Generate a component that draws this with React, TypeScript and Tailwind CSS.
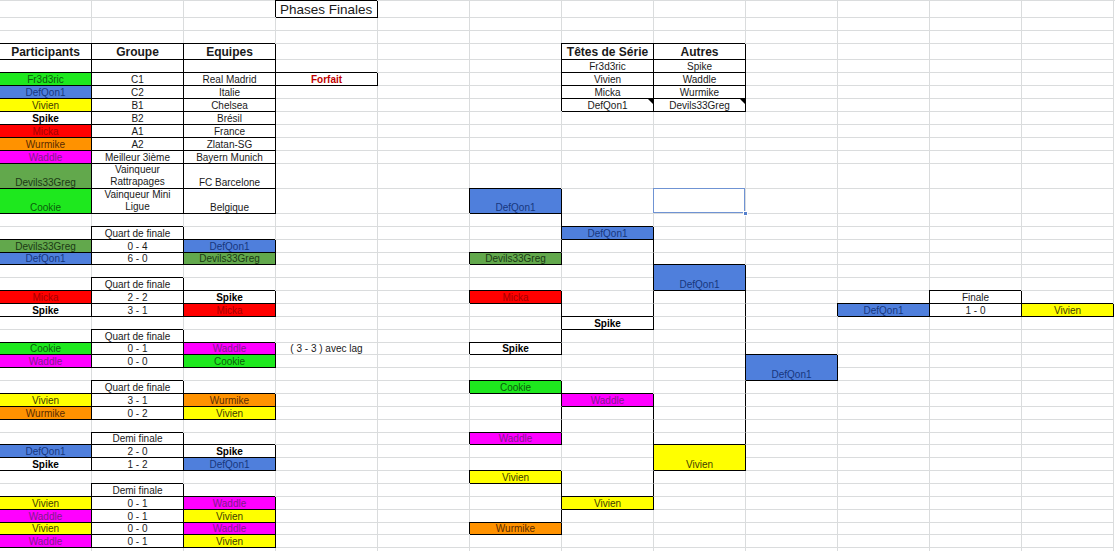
import React from "react";

type Cell = {
  text?: string;
  lines?: string[];
  fill?: string;
  bold?: boolean;
  box?: boolean;
  span?: boolean;
  vr?: boolean;
  tri?: boolean;
  selected?: boolean;
  extra?: string;
};

// fills for each player, like the coloured Excel cells
const fills: Record<string, string> = {
  Fr3d3ric: "bg-[#1ee81e] text-[#0b5c0b]",
  Cookie: "bg-[#1ee81e] text-[#0b5c0b]",
  DefQon1: "bg-[#4f7fdc] text-[#17377e]",
  Vivien: "bg-[#ffff00] text-[#3d3d00]",
  Micka: "bg-[#ff0000] text-[#a30000]",
  Wurmike: "bg-[#ff9200] text-[#5a2b00]",
  Waddle: "bg-[#ff00ff] text-[#7f1a8c]",
  Devils33Greg: "bg-[#62a84c] text-[#1b3a14]",
  Spike: "bg-white text-black",
};

const cells = new Map<string, Cell>();
const put = (r: number, c: number, cell: Cell) => {
  cells.set(`${r},${c}`, { ...cells.get(`${r},${c}`), ...cell });
};
const player = (r: number, c: number, name: string, span = false) =>
  put(r, c, { text: name, fill: fills[name], bold: name === "Spike", box: true, span });
const plain = (r: number, c: number, text: string) => put(r, c, { text, box: true });

// title + tables
put(0, 3, { text: "Phases Finales", box: true, extra: "justify-start pl-1 text-[13.5px] leading-[15px]" });
["Participants", "Groupe", "Equipes"].forEach((t, i) =>
  put(3, i, { text: t, box: true, bold: true, extra: "text-[12px] leading-[14px]" })
);
put(3, 6, { text: "Têtes de Série", box: true, bold: true, extra: "text-[12px] leading-[14px]" });
put(3, 7, { text: "Autres", box: true, bold: true, extra: "text-[12px] leading-[14px]" });
[0, 1, 2].forEach((c) => put(4, c, { box: true }));

const seeds = [
  ["Fr3d3ric", "Spike"],
  ["Vivien", "Waddle"],
  ["Micka", "Wurmike"],
  ["DefQon1", "Devils33Greg"],
];
seeds.forEach(([a, b], i) => {
  plain(4 + i, 6, a);
  plain(4 + i, 7, b);
});
put(7, 6, { tri: true });
put(7, 7, { tri: true });

const teams: [string, string, string][] = [
  ["Fr3d3ric", "C1", "Real Madrid"],
  ["DefQon1", "C2", "Italie"],
  ["Vivien", "B1", "Chelsea"],
  ["Spike", "B2", "Brésil"],
  ["Micka", "A1", "France"],
  ["Wurmike", "A2", "Zlatan-SG"],
  ["Waddle", "Meilleur 3ième", "Bayern Munich"],
];
teams.forEach(([p, g, e], i) => {
  player(5 + i, 0, p);
  plain(5 + i, 1, g);
  plain(5 + i, 2, e);
});
player(12, 0, "Devils33Greg");
put(12, 1, { lines: ["Vainqueur", "Rattrapages"], box: true });
plain(12, 2, "FC Barcelone");
player(13, 0, "Cookie");
put(13, 1, { lines: ["Vainqueur Mini", "Ligue"], box: true });
plain(13, 2, "Belgique");
put(5, 3, { text: "Forfait", box: true, bold: true, extra: "text-[#c00000]" });

// match results
const matches: [number, string, [string, string, string][]][] = [
  [15, "Quart de finale", [["Devils33Greg", "0 - 4", "DefQon1"], ["DefQon1", "6 - 0", "Devils33Greg"]]],
  [19, "Quart de finale", [["Micka", "2 - 2", "Spike"], ["Spike", "3 - 1", "Micka"]]],
  [23, "Quart de finale", [["Cookie", "0 - 1", "Waddle"], ["Waddle", "0 - 0", "Cookie"]]],
  [27, "Quart de finale", [["Vivien", "3 - 1", "Wurmike"], ["Wurmike", "0 - 2", "Vivien"]]],
  [31, "Demi finale", [["DefQon1", "2 - 0", "Spike"], ["Spike", "1 - 2", "DefQon1"]]],
  [
    35,
    "Demi finale",
    [
      ["Vivien", "0 - 1", "Waddle"],
      ["Waddle", "0 - 1", "Vivien"],
      ["Vivien", "0 - 0", "Waddle"],
      ["Waddle", "0 - 1", "Vivien"],
    ],
  ],
];
matches.forEach(([r, title, rows]) => {
  plain(r, 1, title);
  rows.forEach(([a, s, b], i) => {
    player(r + 1 + i, 0, a);
    plain(r + 1 + i, 1, s);
    player(r + 1 + i, 2, b);
  });
});
put(24, 3, { text: "( 3 - 3 ) avec lag" });

// bracket
player(13, 5, "DefQon1");
player(17, 5, "Devils33Greg");
player(20, 5, "Micka");
player(24, 5, "Spike");
player(27, 5, "Cookie");
player(31, 5, "Waddle");
player(34, 5, "Vivien");
player(38, 5, "Wurmike");
player(15, 6, "DefQon1");
player(22, 6, "Spike");
player(28, 6, "Waddle");
player(36, 6, "Vivien");
put(13, 7, { selected: true });
player(18, 7, "DefQon1", true);
player(32, 7, "Vivien", true);
player(25, 8, "DefQon1", true);
player(21, 9, "DefQon1");
plain(20, 10, "Finale");
plain(21, 10, "1 - 0");
player(21, 11, "Vivien");

const lines: [number, number[]][] = [
  [5, [14, 15, 16, 21, 22, 23, 28, 29, 30, 35, 36, 37]],
  [6, [16, 17, 18, 19, 20, 21, 29, 30, 31, 32, 33, 34, 35]],
  [7, [20, 21, 22, 23, 24, 25, 26, 27, 28, 29, 30, 31]],
];
lines.forEach(([c, rs]) => rs.forEach((r) => put(r, c, { vr: true })));

const ROWS = 41;
const COLS = 12;

function SheetCell({ cell }: { cell?: Cell }) {
  const c = cell ?? {};
  let border = "border-r border-b border-[#dadcdd]";
  if (c.box) border = "border-r border-b border-black relative z-[1] shadow-[-1px_-1px_0_0_#000]";
  else if (c.vr) border = "border-r border-b border-r-black border-b-[#dadcdd]";
  return (
    <div
      className={`${border} ${c.span ? "row-span-2" : ""} ${c.fill ?? "text-[#1a1a1a]"} ${
        c.bold ? "font-bold" : ""
      } ${c.selected ? "relative z-[2]" : ""} flex items-end justify-center overflow-visible whitespace-nowrap text-[10px] leading-[11px] ${
        c.extra ?? ""
      }`}
    >
      {c.lines ? (
        <div className="flex flex-col items-center leading-[12px]">
          {c.lines.map((l) => (
            <span key={l}>{l}</span>
          ))}
        </div>
      ) : (
        c.text
      )}
      {c.tri && (
        <span className="absolute top-0 right-0 w-0 h-0 border-l-[5px] border-l-transparent border-t-[5px] border-t-black" />
      )}
      {c.selected && (
        <>
          <span className="absolute top-[-1px] left-[-1px] right-0 bottom-0 border border-[#6f93d3]" />
          <span className="absolute right-[-3px] bottom-[-3px] w-[5px] h-[5px] bg-[#5580cc] border border-white" />
        </>
      )}
    </div>
  );
}

export default function App() {
  const out: React.ReactNode[] = [];
  const covered = new Set<string>();
  for (let r = 0; r < ROWS; r++) {
    for (let c = 0; c < COLS; c++) {
      const key = `${r},${c}`;
      if (covered.has(key)) continue;
      const cell = cells.get(key);
      if (cell?.span) covered.add(`${r + 1},${c}`);
      out.push(<SheetCell key={key} cell={cell} />);
    }
  }
  return (
    <div className="w-[1115px] h-[551px] overflow-hidden bg-white font-['Liberation_Sans',Arial,sans-serif]">
      <div className="grid grid-cols-[92px_92px_92px_102px_repeat(8,92px)] grid-rows-[17px_13px_13px_16px_repeat(8,13px)_25px_25px_repeat(27,12.87px)] border-t border-[#dadcdd]">
        {out}
      </div>
    </div>
  );
}
